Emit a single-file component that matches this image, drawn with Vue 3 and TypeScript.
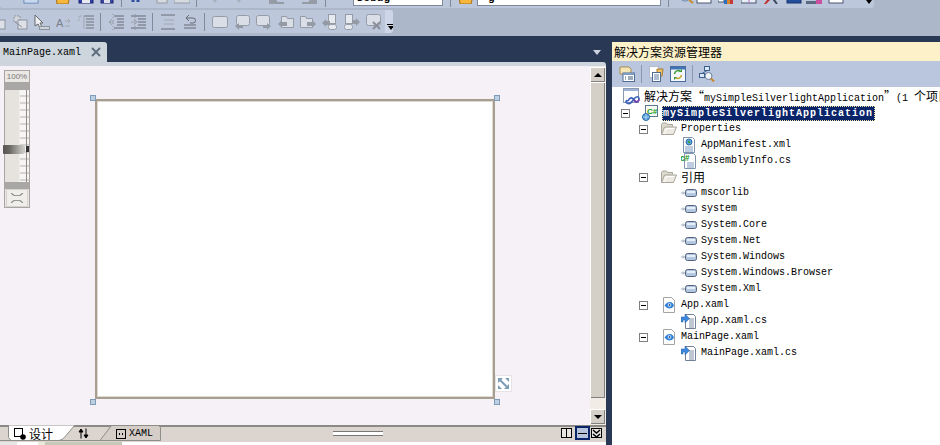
<script setup lang="ts">
interface TreeRow {
  label: string
  icon: string
  depth: number
  expander?: boolean
  cjk?: boolean
}

const rows: TreeRow[] = [
  { label: 'Properties', icon: 'folder', depth: 2, expander: true },
  { label: 'AppManifest.xml', icon: 'manifest', depth: 3 },
  { label: 'AssemblyInfo.cs', icon: 'csfile', depth: 3 },
  { label: '引用', icon: 'folder', depth: 2, expander: true, cjk: true },
  { label: 'mscorlib', icon: 'ref', depth: 3 },
  { label: 'system', icon: 'ref', depth: 3 },
  { label: 'System.Core', icon: 'ref', depth: 3 },
  { label: 'System.Net', icon: 'ref', depth: 3 },
  { label: 'System.Windows', icon: 'ref', depth: 3 },
  { label: 'System.Windows.Browser', icon: 'ref', depth: 3 },
  { label: 'System.Xml', icon: 'ref', depth: 3 },
  { label: 'App.xaml', icon: 'xaml', depth: 2, expander: true },
  { label: 'App.xaml.cs', icon: 'code', depth: 3 },
  { label: 'MainPage.xaml', icon: 'xaml', depth: 2, expander: true },
  { label: 'MainPage.xaml.cs', icon: 'code', depth: 3 }
]

const slotWidth = (depth: number): number => (depth === 2 ? 49 : 69)

const topLeft = [
  { id: 'cNew', gap: 23 },
  { id: 'cOpen', gap: 16 },
  { id: 'cSave', gap: 7 },
  { id: 'cSaveAll', gap: 6 }
]
const topMid = [
  { id: 'cCut', gap: 8 },
  { id: 'cGrey', gap: 9 },
  { id: 'cGreyWide', gap: 3 }
]
const topArrows = [
  { id: 'cFaint', gap: 13 },
  { id: 'cFaint', gap: 8 },
  { id: 'cBack', gap: 18 },
  { id: 'cFwd', gap: 18 }
]
const topRight = [
  { id: 'cFind', gap: 10 },
  { id: 'cDoc', gap: 1 },
  { id: 'cChart', gap: 6 },
  { id: 'cWin', gap: 7 },
  { id: 'cTool', gap: 6 },
  { id: 'cBox', gap: 7 },
  { id: 'cBar', gap: 4 },
  { id: 'cDoc', gap: 6 }
]
const designIcons = ['gOut', 'gIn']
const lineIcons = ['gSpace', 'gUndo']
const layerIcons = ['gRect', 'gBubL', 'gBubR', 'gFolL', 'gFolR', 'gDocL', 'gDocR', 'gBubX']
const firstIcons = ['gAlign', 'gAlign', 'gCursor', 'gText', 'gTab']
</script>

<template>
  <div class="app">
    <svg class="defs" width="0" height="0" aria-hidden="true">
      <defs>
        <!-- cut-off top toolbar -->
        <symbol id="cNew" viewBox="0 0 16 16"><rect x="1" y="0" width="14" height="15" fill="#fff" stroke="#5a7fb5"/><rect x="2" y="12" width="12" height="2" fill="#c8d8ee"/></symbol>
        <symbol id="cOpen" viewBox="0 0 16 16"><path d="M1 8h14l-2 8H2z" fill="#f6b73c" stroke="#a5701a"/></symbol>
        <symbol id="cSave" viewBox="0 0 16 16"><rect x="1" y="0" width="14" height="15" fill="#2c3fa8" stroke="#1c2570"/><rect x="4" y="11" width="8" height="4" fill="#e8e8f0"/></symbol>
        <symbol id="cSaveAll" viewBox="0 0 16 16"><rect x="1" y="0" width="12" height="15" fill="#3a4aa0" stroke="#1c2570"/><rect x="4" y="11" width="6" height="4" fill="#dfe0ea"/></symbol>
        <symbol id="cCut" viewBox="0 0 16 16"><path d="M3 0v14M8 0v14" stroke="#2c4fa0" stroke-width="3" fill="none"/></symbol>
        <symbol id="cGrey" viewBox="0 0 16 16"><rect x="2" y="4" width="10" height="11" fill="#d5d9e0" stroke="#969ca6"/></symbol>
        <symbol id="cGreyWide" viewBox="0 0 16 16"><rect x="0" y="4" width="16" height="11" fill="#d5d9e0" stroke="#969ca6"/></symbol>
        <symbol id="cFaint" viewBox="0 0 16 16"><path d="M4 14l6-7" stroke="#a6adb9" stroke-width="2" fill="none"/></symbol>
        <symbol id="cBack" viewBox="0 0 16 16"><path d="M1 11h6l3 3h6v2H1z" fill="#969ca6"/></symbol>
        <symbol id="cFwd" viewBox="0 0 16 16"><path d="M15 11H9l-3 3H0v2h15z" fill="#969ca6"/></symbol>
        <symbol id="cGo" viewBox="0 0 16 16"><path d="M3 0h5L4 15z" fill="#1f8a1f"/></symbol>
        <symbol id="cFolder" viewBox="0 0 16 16"><path d="M1 8h14l-2 8H2z" fill="#f6b73c" stroke="#a5701a"/></symbol>
        <symbol id="cFind" viewBox="0 0 16 16"><circle cx="6" cy="8" r="5" fill="#dfe9f5" stroke="#5f7ea5"/><path d="M10 12l4 3" stroke="#c88a2b" stroke-width="2"/></symbol>
        <symbol id="cDoc" viewBox="0 0 16 16"><rect x="1" y="2" width="14" height="13" fill="#fff" stroke="#46566e"/><path d="M3 11h10" stroke="#8a95a5"/></symbol>
        <symbol id="cChart" viewBox="0 0 16 16"><rect x="0" y="8" width="6" height="6" fill="#fff" stroke="#46566e"/><rect x="6" y="4" width="3" height="12" fill="#2c6fc0"/><rect x="9" y="2" width="3" height="14" fill="#d8872a"/><rect x="12" y="6" width="3" height="10" fill="#c23a3a"/></symbol>
        <symbol id="cWin" viewBox="0 0 16 16"><rect x="0" y="3" width="15" height="12" fill="#e8ecf4" stroke="#46566e"/><path d="M8 3v12" stroke="#b070c0"/></symbol>
        <symbol id="cTool" viewBox="0 0 16 16"><path d="M1 16l6-8 2 2-6 6z" fill="#c22a2a"/><path d="M8 8l6 8" stroke="#3c4a60" stroke-width="2"/></symbol>
        <symbol id="cBox" viewBox="0 0 16 16"><rect x="1" y="1" width="14" height="14" fill="#244f9c" stroke="#1a3468"/><rect x="5" y="8" width="6" height="4" fill="#3da03d"/></symbol>
        <symbol id="cBar" viewBox="0 0 16 16"><rect x="0" y="13" width="11" height="3" fill="#5a6a80"/><rect x="10" y="8" width="6" height="8" fill="#cc4fa0"/></symbol>
        <!-- disabled designer toolbar -->
        <symbol id="gAlign" viewBox="0 0 16 16"><rect x="2" y="2" width="6" height="6" fill="#d3d7de" stroke="#8d939d" stroke-dasharray="2 1"/><rect x="6" y="6" width="9" height="9" fill="#dde0e7" stroke="#8d939d"/><path d="M3 8l7 5" stroke="#8d939d"/></symbol>
        <symbol id="gCursor" viewBox="0 0 16 16"><path d="M1 1v11l3-2 2 4 2-1-2-4h3z" fill="#eef0f4" stroke="#666"/><rect x="5.500" y="12.500" width="10" height="3" fill="#cfd3da" stroke="#8d939d"/></symbol>
        <symbol id="gText" viewBox="0 0 16 16"><text x="0" y="13" font-family="Liberation Sans, sans-serif" font-size="11" fill="#7b808a">A</text><path d="M9 7h5M12 5l2 2-2 2M9 12h5" stroke="#a2a7b0" fill="none"/></symbol>
        <symbol id="gTab" viewBox="0 0 16 16"><path d="M4 2H1v5" stroke="#a2a7b0" stroke-dasharray="2 1" fill="none"/><path d="M6 2h10M8 5h8M8 8h8M8 11h8M8 14h8" stroke="#6f747d"/><path d="M6 2v13" stroke="#a2a7b0"/></symbol>
        <symbol id="gOut" viewBox="0 0 16 16"><path d="M6 2h10M9 5h7M9 8h7M9 11h7M6 14h10" stroke="#666b74"/><path d="M6 8H1M4 5L1 8l3 3" stroke="#9aa0aa" fill="none"/><path d="M5 0v16" stroke="#8d939d" stroke-dasharray="1 2"/></symbol>
        <symbol id="gIn" viewBox="0 0 16 16"><path d="M1 2h15M8 5h8M8 8h8M8 11h8M1 14h15" stroke="#666b74"/><path d="M1 8h5M4 5l3 3-3 3" stroke="#9aa0aa" fill="none"/><path d="M5 0v16" stroke="#8d939d" stroke-dasharray="1 2"/></symbol>
        <symbol id="gSpace" viewBox="0 0 16 16"><path d="M1 1h14M1 15h14" stroke="#666b74"/><path d="M4 6h10M4 10h10" stroke="#a2a7b0"/></symbol>
        <symbol id="gUndo" viewBox="0 0 16 16"><path d="M5 4h6a2.500 2.500 0 0 1 0 5H8" stroke="#666b74" fill="none"/><path d="M7 1L4 4l3 3" stroke="#666b74" fill="none"/><path d="M2 11h12M2 14h12" stroke="#666b74"/></symbol>
        <symbol id="gRect" viewBox="0 0 16 16"><rect x="0.500" y="2.500" width="15" height="11" rx="2" fill="#dadee6" stroke="#969ca6"/></symbol>
        <symbol id="gBubL" viewBox="0 0 16 16"><rect x="2.500" y="1.500" width="13" height="10" rx="2" fill="#dadee6" stroke="#969ca6"/><path d="M1 12l4-3v2h4v3H5v2z" fill="#959ba5"/></symbol>
        <symbol id="gBubR" viewBox="0 0 16 16"><rect x="0.500" y="1.500" width="13" height="10" rx="2" fill="#dadee6" stroke="#969ca6"/><path d="M15 12l-4-3v2H7v3h4v2z" fill="#959ba5"/></symbol>
        <symbol id="gFolL" viewBox="0 0 16 16"><path d="M3.500 2.500h5l1 2h6v9h-12z" fill="#dadee6" stroke="#969ca6"/><path d="M0 10l4-4v2h5v4H4v2z" fill="#959ba5"/></symbol>
        <symbol id="gFolR" viewBox="0 0 16 16"><path d="M.5 2.500h5l1 2h6v9H.5z" fill="#dadee6" stroke="#969ca6"/><path d="M16 10l-4-4v2H7v4h5v2z" fill="#959ba5"/></symbol>
        <symbol id="gDocL" viewBox="0 0 16 16"><rect x="6.500" y="0.500" width="7" height="9" fill="#e6e9ef" stroke="#969ca6"/><rect x="6.500" y="10.500" width="8" height="5" rx="2" fill="#e6e9ef" stroke="#969ca6"/><path d="M0 9l4-4v2h4v4H4v2z" fill="#959ba5"/></symbol>
        <symbol id="gDocR" viewBox="0 0 16 16"><rect x="1.500" y="0.500" width="7" height="9" fill="#e6e9ef" stroke="#969ca6"/><rect x="0.500" y="10.500" width="8" height="5" rx="2" fill="#e6e9ef" stroke="#969ca6"/><path d="M16 8l-4-4v2H8v4h4v2z" fill="#959ba5"/></symbol>
        <symbol id="gBubX" viewBox="0 0 16 16"><rect x="0.500" y="0.500" width="14" height="11" rx="2" fill="#dadee6" stroke="#969ca6"/><path d="M7 8l7 7M14 8l-7 7" stroke="#8a8f99" stroke-width="2"/></symbol>
        <!-- solution explorer toolbar -->
        <symbol id="sProps" viewBox="0 0 16 16"><path d="M1 1h9l2 2v5H1z" fill="#f5e6b8" stroke="#a98e4a"/><rect x="4" y="7" width="11.500" height="8.500" fill="#fff" stroke="#4d6a92"/><rect x="4" y="7" width="11.500" height="2" fill="#7f9cc4"/><path d="M6 11h1M9 11h5M6 13h1M9 13h5" stroke="#3f5878"/></symbol>
        <symbol id="sAll" viewBox="0 0 16 16"><rect x="1.500" y="0.500" width="9" height="11" fill="#fff" stroke="#8a94a3" stroke-dasharray="1 1"/><path d="M9 3h6l-1 7H9z" fill="#eec069" stroke="#a97d2b"/><rect x="4.500" y="6.500" width="8" height="9" fill="#fff" stroke="#4d6a92"/><path d="M6 9h5M6 11h5M6 13h5" stroke="#5c7aa6"/></symbol>
        <symbol id="sRefresh" viewBox="0 0 16 16"><rect x="0.500" y="0.500" width="15" height="15" fill="#f4f8fc" stroke="#4a6d9c"/><rect x="1" y="1" width="14" height="2.500" fill="#3f73b8"/><path d="M4.500 8a3.500 3.500 0 0 1 6-2.300" stroke="#3c9c2f" stroke-width="1.500" fill="none"/><path d="M11.500 9a3.500 3.500 0 0 1-6 2.300" stroke="#c2a020" stroke-width="1.500" fill="none"/><path d="M9 6h3V3zM7 11H4v3z" fill="#3c9c2f"/></symbol>
        <symbol id="sClass" viewBox="0 0 16 16"><rect x="5.500" y="0.500" width="5" height="4" fill="#dbe7f6" stroke="#3d618f"/><rect x="0.500" y="7.500" width="5" height="4" fill="#dbe7f6" stroke="#3d618f"/><path d="M8 4.500L3 7.500" stroke="#3d618f"/><circle cx="9.500" cy="10" r="3.500" fill="#eef3f9" stroke="#6b7f99"/><path d="M12 12.500l3 3" stroke="#c9862b" stroke-width="2"/></symbol>
        <!-- tree icons -->
        <symbol id="solution" viewBox="0 0 18 18"><rect x="0.500" y="0.500" width="15" height="14" fill="#fff" stroke="#8b9ab0"/><rect x="1" y="1" width="14" height="2" fill="#9db4d6"/><path d="M5 13c2-4 4-4 6-1s5 2 5-1-3-3-5 0-4 6-7 4c-2-1-1-3 1-2" fill="none" stroke="#3f63b8" stroke-width="1.600"/><path d="M11 12c2 3 5 2 5-1" fill="none" stroke="#7a3fb0" stroke-width="1.600"/></symbol>
        <symbol id="project" viewBox="0 0 16 16"><rect x="3.500" y="0.500" width="12" height="11" fill="#f7fbf5" stroke="#5e7a8a"/><text x="5" y="9" font-family="Liberation Sans, sans-serif" font-weight="700" font-size="8" fill="#119911">C#</text><circle cx="4" cy="12" r="3.500" fill="#4e9ddd" stroke="#2c6aa5"/><path d="M1 12h6M4 9v6" stroke="#c6e2f7" stroke-width=".8"/></symbol>
        <symbol id="folder" viewBox="0 0 16 16"><path d="M.5 13.500V3.500l1-1.500h4l1 1.500h5v2" fill="#dcd9cf" stroke="#a8a599"/><path d="M.5 13.500l3-7.500h12l-3 7.500z" fill="#eceae2" stroke="#a8a599"/><path d="M3 13l2.500-5.500h8" stroke="#fff" fill="none"/></symbol>
        <symbol id="manifest" viewBox="0 0 16 16"><path d="M2.500.5h9l2 2v13h-11z" fill="#fff" stroke="#7e93ad"/><circle cx="8" cy="5" r="3" fill="#5ca4de" stroke="#2c6aa5"/><path d="M7 4h2v2H7z" fill="#3ba33b"/><path d="M4 10h8M4 12h8M4 14h8" stroke="#7e9ac4"/></symbol>
        <symbol id="csfile" viewBox="0 0 16 16"><path d="M3.500.5h9l2 2v13h-11z" fill="#fff" stroke="#7e93ad"/><path d="M6 10h7M6 12h7M6 14h7" stroke="#7e9ac4"/><text x="-1" y="8" font-family="Liberation Sans, sans-serif" font-weight="700" font-size="8.500" fill="#0d9a0d">c#</text></symbol>
        <symbol id="ref" viewBox="0 0 16 16"><path d="M0 8h1M2 8h2" stroke="#9aa7ba"/><path d="M2 6.500v3" stroke="#9aa7ba"/><rect x="4.500" y="4.500" width="11" height="7" rx="2" fill="#b3c6df" stroke="#53627a"/><rect x="6" y="6" width="8" height="2" fill="#e6eef8"/></symbol>
        <symbol id="xaml" viewBox="0 0 16 16"><path d="M2.500 .5h8l3 3v12h-11z" fill="#fff" stroke="#a4a4a4"/><path d="M3.500 8.500C5 6 7 5 9 5s3 1.500 4 3.500c-1 2-2.500 3-4.500 3S5 10.500 3.500 8.500z" fill="#2f80d8"/><circle cx="8.500" cy="8" r="1.800" fill="#fff"/><circle cx="8.500" cy="8" r="1" fill="#164f96"/></symbol>
        <symbol id="code" viewBox="0 0 16 16"><path d="M4.500 1.500h8l2 2v12h-10z" fill="#fff" stroke="#6f7f96"/><path d="M8 6h5M8 8h5M8 10h5M8 12h5M8 14h5" stroke="#7e8ea6"/><path d="M0 4h4V1l4.500 4.500L4 10V7H2v2H0z" fill="#3f8ade" stroke="#235c9e" stroke-width=".5"/></symbol>
      </defs>
    </svg>

    <header class="bands">
      <div class="tb top">
        <svg v-for="(it, i) in topLeft" :key="'l' + i" class="ci" :style="{ marginLeft: it.gap + 'px' }"><use :href="'#' + it.id" /></svg>
        <i class="tsep tsep-a"></i>
        <svg v-for="(it, i) in topMid" :key="'m' + i" class="ci" :style="{ marginLeft: it.gap + 'px' }"><use :href="'#' + it.id" /></svg>
        <i class="tsep tsep-b"></i>
        <svg v-for="(it, i) in topArrows" :key="'a' + i" class="ci" :style="{ marginLeft: it.gap + 'px' }"><use :href="'#' + it.id" /></svg>
        <i class="tsep tsep-c"></i>
        <svg class="ci go"><use href="#cGo" /></svg>
        <div class="combo combo-a"><span>Debug</span></div>
        <i class="tsep tsep-d"></i>
        <svg class="ci fold"><use href="#cFolder" /></svg>
        <div class="combo combo-b"><span>g</span></div>
        <i class="tsep tsep-d"></i>
        <svg v-for="(it, i) in topRight" :key="'r' + i" class="ci" :style="{ marginLeft: it.gap + 'px' }"><use :href="'#' + it.id" /></svg>
        <div class="chevron chevron-top"><b></b></div>
      </div>
      <div class="tb second">
        <svg v-for="(id, i) in firstIcons" :key="'f' + i" class="gi" :class="{ lead: i === 0 }"><use :href="'#' + id" /></svg>
        <i class="gsep"></i>
        <svg v-for="id in designIcons" :key="id" class="gi"><use :href="'#' + id" /></svg>
        <i class="gsep"></i>
        <svg v-for="id in lineIcons" :key="id" class="gi"><use :href="'#' + id" /></svg>
        <i class="gsep"></i>
        <svg v-for="id in layerIcons" :key="id" class="gi"><use :href="'#' + id" /></svg>
        <div class="chevron"><s></s><b></b></div>
      </div>
    </header>

    <main class="work">
      <section class="doc">
        <div class="doc-tabs">
          <div class="doc-tab">
            <span class="mono">MainPage.xaml</span>
            <svg class="close" width="10" height="10" viewBox="0 0 10 10"><path d="M1 1l8 8M9 1L1 9" stroke="#5c6a7c" stroke-width="1.800"/></svg>
          </div>
          <i class="doc-menu"></i>
        </div>
        <div class="doc-strip"></div>
        <div class="doc-body">
          <div class="surface">
            <div class="zoom">
              <div class="zoom-label">100%</div>
              <div class="zoom-bar"></div>
              <div class="zoom-track">
                <div class="zoom-ticks"></div>
                <div class="zoom-thumb"></div>
                <div class="zoom-mark"></div>
              </div>
              <div class="zoom-bar short"></div>
              <div class="zoom-fit">
                <svg width="12" height="10" viewBox="0 0 12 10"><path d="M3 2.500h6M3 7.500h6" stroke="#999"/><path d="M0 0l3 2.500M12 0L9 2.500M0 10l3-2.500M12 10L9 7.500" stroke="#888" stroke-width="1.200"/></svg>
              </div>
            </div>
            <div class="artboard">
              <i class="handle tl"></i>
              <i class="handle tr"></i>
              <i class="handle bl"></i>
              <i class="handle br"></i>
              <div class="resize">
                <svg width="13" height="13" viewBox="0 0 13 13"><path d="M2 2l9 9" stroke="#7d9cb8" stroke-width="2"/><path d="M1 1h5L1 6zM12 12H7l5-5z" fill="#7d9cb8"/><path d="M8 1h4v4zM1 8v4h4z" fill="#7d9cb8"/></svg>
              </div>
            </div>
          </div>
          <div class="vscroll">
            <div class="sbtn"><i class="tri up"></i></div>
            <div class="thumb"></div>
            <div class="rest"></div>
            <div class="sbtn"><i class="tri down"></i></div>
          </div>
        </div>
        <div class="viewbar">
          <div class="view-tabs">
            <svg class="tab-shapes" width="170" height="17" viewBox="0 0 170 17">
              <path d="M100 15.500h60.500V2.500l-2-2h-47z" fill="#d4cdc8" stroke="#8f8d88"/>
              <path d="M8.500 0v12.500l2.500 3h47c3 0 6-2 8-5l9-10.500z" fill="#fff" stroke="#8f8d88"/>
              <path d="M0 15.500h11M58 15.500h42" stroke="#8f8d88"/>
            </svg>
            <div class="vt design">
              <svg width="12" height="12" viewBox="0 0 12 12"><rect x="0.500" y="0.500" width="8" height="8" fill="#fff" stroke="#000"/><circle cx="9" cy="9" r="2.800" fill="#000"/></svg>
              <span class="cjk">设计</span>
            </div>
            <div class="swap">
              <svg width="11" height="11" viewBox="0 0 11 11"><path d="M3 10.500V2M1 4l2-3 2 3zM8 .5V9M6 7l2 3 2-3z" fill="#000" stroke="#000"/></svg>
            </div>
            <div class="vt xaml">
              <svg width="10" height="10" viewBox="0 0 10 10"><rect x="0.500" y="0.500" width="9" height="9" fill="none" stroke="#000"/><path d="M3 5l1-1M3 5l1 1M7 5L6 4M7 5L6 6" stroke="#000"/></svg>
              <span class="mono">XAML</span>
            </div>
          </div>
          <div class="grip"></div>
          <div class="layouts">
            <i class="lb"><em class="v"></em></i>
            <i class="lb on"><em class="h"></em></i>
            <i class="lb"><svg width="9" height="9" viewBox="0 0 9 9"><path d="M1 1l3.500 3L8 1M1 5l3.500 3L8 5" fill="none" stroke="#000" stroke-width="1.500"/></svg></i>
          </div>
        </div>
        <div class="foot">
          <i class="f1"></i><i class="f2"></i><i class="f3"></i><i class="f4"></i><i class="f5"></i>
        </div>
      </section>

      <aside class="explorer">
        <div class="ex-title cjk">解决方案资源管理器</div>
        <div class="ex-tools">
          <svg class="sv"><use href="#sProps" /></svg>
          <i class="ex-sep"></i>
          <svg class="sv"><use href="#sAll" /></svg>
          <svg class="sv"><use href="#sRefresh" /></svg>
          <i class="ex-sep"></i>
          <svg class="sv"><use href="#sClass" /></svg>
        </div>
        <div class="tree">
          <div class="row">
            <svg class="solution-icon"><use href="#solution" /></svg>
            <span class="label sol"><span class="cjk">解决方案“</span><span class="mono">mySimpleSilverlightApplication</span><span class="cjk">”</span><span class="mono">(1 </span><span class="cjk">个项目)</span></span>
          </div>
          <div class="row">
            <span class="slot project-slot"><i class="exp"></i></span>
            <svg class="ic"><use href="#project" /></svg>
            <span class="selected mono">mySimpleSilverlightApplication</span>
          </div>
          <div v-for="r in rows" :key="r.label" class="row">
            <span class="slot" :style="{ width: slotWidth(r.depth) + 'px' }"><i v-if="r.expander" class="exp"></i></span>
            <svg class="ic"><use :href="'#' + r.icon" /></svg>
            <span class="label" :class="r.cjk ? 'cjk' : 'mono'">{{ r.label }}</span>
          </div>
        </div>
      </aside>
    </main>
  </div>
</template>

<style scoped>
.app {
  width: 940px;
  height: 445px;
  overflow: hidden;
  display: flex;
  flex-direction: column;
  background: #293955;
}
.defs { position: absolute; }
.mono { font-family: "Liberation Mono", monospace; font-size: 10px; }
.cjk { font-family: "Noto Sans CJK SC", sans-serif; font-size: 12px; }

.bands { height: 36px; flex: none; background: #acb8ca; }
.tb { display: flex; overflow: hidden; background: #bcc7dc; }
.top { width: 874px; height: 8px; align-items: flex-start; border-radius: 0 0 3px 3px; }
.ci { width: 16px; height: 16px; flex: none; margin-top: -12px; }
.tsep { flex: none; width: 1px; height: 7px; background: #7f8a9b; }
.tsep-a { margin-left: 5px; }
.tsep-b { margin-left: 6px; }
.tsep-c { margin-left: 7px; }
.tsep-d { margin-left: 7px; }
.ci.go { margin-left: 10px; width: 10px; }
.ci.fold { margin-left: 7px; }
.combo {
  flex: none;
  height: 6px;
  background: #fff;
  border: 1px solid #7f8a9b;
  border-top: 0;
  overflow: hidden;
  position: relative;
  box-sizing: border-box;
}
.combo span {
  position: absolute;
  left: 3px;
  bottom: 1px;
  font: 700 11px/11px "Liberation Mono", monospace;
  letter-spacing: 0;
}
.combo-a { margin-left: 7px; width: 90px; }
.combo-b { margin-left: 3px; width: 184px; }
.combo-b span { left: 10px; }
.chevron {
  margin-left: -3px;
  width: 11px;
  flex: none;
  background: #cdd6e6;
  display: flex;
  flex-direction: column;
  align-items: center;
  justify-content: flex-end;
  border-radius: 0 3px 3px 0;
}
.chevron-top { margin-left: auto; background: #bcc7dc; }
.chevron s {
  display: block;
  width: 7px;
  height: 1px;
  background: #000;
  margin-bottom: 1px;
}
.chevron b {
  display: block;
  width: 0;
  height: 0;
  border-top: 4px solid #000;
  border-left: 3.500px solid transparent;
  border-right: 3.500px solid transparent;
  margin-bottom: 3px;
}
.chevron-top b { margin-bottom: 1px; }

.second {
  width: 393px;
  height: 23px;
  margin-top: 2px;
  align-items: center;
  gap: 6px;
  border-radius: 0 3px 3px 0;
}
.gi { width: 16px; height: 16px; flex: none; }
.gi.lead { margin-left: -10px; }
.gsep { flex: none; width: 1px; height: 18px; background: #7f8a9b; margin-right: 1px; }
.second .chevron { align-self: stretch; }

.work { flex: 1; display: flex; min-height: 0; }
.doc { width: 606px; flex: none; display: flex; flex-direction: column; padding-top: 6px; box-sizing: border-box; }
.doc-tabs { height: 20px; display: flex; align-items: center; justify-content: space-between; flex: none; }
.doc-tab {
  width: 107px;
  height: 20px;
  box-sizing: border-box;
  background: #cdd6dc;
  border-radius: 0 3px 0 0;
  display: flex;
  align-items: center;
  padding-left: 3px;
  color: #000;
}
.close { margin-left: 10px; }
.doc-menu {
  width: 0;
  height: 0;
  border-top: 5px solid #cdd3dd;
  border-left: 4px solid transparent;
  border-right: 4px solid transparent;
  margin-right: 5px;
}
.doc-strip { height: 4px; flex: none; background: #ced4dd; border-radius: 0 3px 0 0; }
.doc-body { flex: 1; min-height: 0; display: flex; background: #f5f1f6; }
.surface { flex: 1; display: flex; align-items: flex-start; padding: 4px 0 0 4px; }

.zoom {
  width: 26px;
  height: 138px;
  flex: none;
  box-sizing: border-box;
  border: 1px solid #a8a4a4;
  display: flex;
  flex-direction: column;
  background: #ebe8e4;
}
.zoom-label {
  height: 11px;
  flex: none;
  font: 8px/11px "Liberation Sans", sans-serif;
  color: #777;
  text-align: center;
}
.zoom-bar { height: 8px; flex: none; background: #a9a6a6; }
.zoom-bar.short { height: 7px; }
.zoom-track { flex: 1; position: relative; background: #e6e3de; }
.zoom-ticks {
  position: absolute;
  top: 0;
  bottom: 0;
  right: 0;
  width: 9px;
  background-color: #f6f5f3;
  background-image: repeating-linear-gradient(to bottom, transparent 0, transparent 5px, #d6d4d0 5px, #d6d4d0 7px);
  border-left: 1px solid #f0efec;
}
.zoom-ticks::after {
  content: "";
  position: absolute;
  top: 0;
  bottom: 0;
  left: 6px;
  width: 1px;
  background: #8e8c88;
}
.zoom-thumb {
  position: absolute;
  left: -2px;
  top: 55px;
  width: 22px;
  height: 9px;
  background: linear-gradient(to right, #55534f, #6b6964 30%, #c8c6c2 90%);
  border-radius: 1px 3px 3px 1px;
}
.zoom-mark { position: absolute; left: 21px; top: 56px; width: 3px; height: 6px; background: #333; }
.zoom-fit {
  flex: none;
  height: 18px;
  background: #f0eeea;
  display: flex;
  align-items: center;
  justify-content: center;
  box-shadow: inset 0 0 0 1px #d6d3cf;
  margin: 0 1px;
}

.artboard {
  position: relative;
  flex: none;
  width: 400px;
  height: 300px;
  box-sizing: border-box;
  margin: 29px 0 0 65px;
  background: #fff;
  border: 2px solid #a89e90;
  box-shadow: inset 0 0 0 1px #ded9d2;
}
.handle {
  position: absolute;
  width: 6px;
  height: 6px;
  box-sizing: border-box;
  background: #bcd0e2;
  border: 1px solid #7d9cb8;
}
.tl { left: -7px; top: -6px; }
.tr { right: -7px; top: -6px; }
.bl { left: -7px; bottom: -8px; }
.br { right: -7px; bottom: -8px; }
.resize {
  position: absolute;
  left: 398px;
  top: 274px;
  width: 17px;
  height: 17px;
  box-sizing: border-box;
  background: #fff;
  border: 1px solid #e4e2e6;
  display: flex;
  align-items: center;
  justify-content: center;
}

.vscroll {
  width: 16px;
  flex: none;
  display: flex;
  flex-direction: column;
  padding-top: 1px;
  box-sizing: border-box;
  background: #f1ede6;
}
.sbtn {
  width: 15px;
  height: 15px;
  flex: none;
  box-sizing: border-box;
  background: #d4d0c8;
  box-shadow: inset 1px 1px 0 #fff, inset -1px -1px 0 #808080;
  display: flex;
  align-items: center;
  justify-content: center;
}
.thumb {
  width: 15px;
  height: 316px;
  flex: none;
  box-sizing: border-box;
  background: #d4d0c8;
  box-shadow: inset 1px 1px 0 #fff, inset -1px -1px 0 #808080;
}
.rest { height: 11px; flex: none; }
.tri {
  width: 0;
  height: 0;
  border-left: 4px solid transparent;
  border-right: 4px solid transparent;
}
.tri.up { border-bottom: 4px solid #000; }
.tri.down { border-top: 4px solid #000; }

.viewbar {
  height: 17px;
  flex: none;
  position: relative;
  display: flex;
  align-items: flex-start;
  box-sizing: border-box;
  background: #dbd4cf;
  border-top: 2px solid #8b8986;
}
.view-tabs { position: relative; width: 170px; height: 13px; display: flex; align-items: center; flex: none; }
.tab-shapes { position: absolute; left: 0; top: -2px; }
.vt { position: relative; display: flex; align-items: center; color: #000; }
.design { margin-left: 14px; gap: 3px; width: 60px; }
.design .cjk { line-height: 13px; }
.swap { position: relative; display: flex; margin-left: 4px; }
.xaml { margin-left: 27px; gap: 3px; }
.grip {
  margin: 4px 0 0 163px;
  width: 50px;
  height: 5px;
  flex: none;
  background: #fff;
  box-shadow: inset 0 1px 0 #777, inset 0 -1px 0 #777;
}
.layouts { position: absolute; left: 561px; top: -1px; display: flex; align-items: center; height: 14px; }
.lb {
  width: 11px;
  height: 10px;
  box-sizing: border-box;
  background: #e8e4e0;
  border: 1px solid #000;
  display: flex;
  align-items: center;
  justify-content: center;
}
.lb.on {
  width: 15px;
  height: 14px;
  margin: 0 1px 0 3px;
  background: #b6c3dd;
  border: 1px solid #0a246a;
  box-shadow: inset 0 0 0 1px #0a246a;
}
.v { display: block; width: 1px; height: 8px; background: #000; }
.h { display: block; width: 9px; height: 1px; background: #000; }
.foot { height: 3px; flex: none; display: flex; }
.foot i { display: block; height: 3px; }
.f1 { width: 17px; background: #e6e6e6; }
.f2 { width: 21px; background: #fff; }
.f3 { width: 7px; background: #e8ecd8; }
.f4 { width: 77px; background: #c8c8b8; }
.f5 { flex: 1; background: #fff; }

.explorer {
  width: 328px;
  margin-left: 6px;
  margin-top: 6px;
  flex: none;
  display: flex;
  flex-direction: column;
  background: #fff;
}
.ex-title {
  height: 19px;
  flex: none;
  background: #fdf1c9;
  padding-left: 2px;
  line-height: 19px;
  color: #000;
}
.ex-tools {
  height: 26px;
  flex: none;
  background: #bac6de;
  display: flex;
  align-items: center;
  padding-left: 7px;
}
.sv { width: 16px; height: 16px; flex: none; }
.sv + .sv { margin-left: 6px; }
.ex-sep { width: 1px; height: 18px; flex: none; background: #8b97ab; margin: 0 6px; }
.tree { flex: 1; padding-top: 2px; white-space: nowrap; overflow: hidden; color: #000; }
.row { height: 16px; display: flex; align-items: center; }
.slot {
  flex: none;
  display: flex;
  justify-content: flex-end;
  align-items: center;
  padding-right: 13px;
  box-sizing: border-box;
}
.project-slot { width: 30px; padding-right: 12px; }
.exp {
  width: 9px;
  height: 9px;
  box-sizing: border-box;
  border: 1px solid #808080;
  background: linear-gradient(#000, #000) center / 5px 1px no-repeat #fff;
}
.ic { width: 16px; height: 16px; flex: none; }
.solution-icon { width: 18px; height: 18px; flex: none; margin-left: 11px; }
.label { margin-left: 4px; line-height: 16px; }
.label.sol { margin-left: 3px; }
.selected {
  margin-left: 4px;
  height: 15px;
  width: 213px;
  box-sizing: border-box;
  background: #0a246a;
  color: #fff;
  font-weight: 700;
  letter-spacing: 1px;
  line-height: 13px;
  border: 1px dotted #f5e6a0;
  flex: none;
}
</style>

<style>
html, body { margin: 0; background: #293955; }
</style>
